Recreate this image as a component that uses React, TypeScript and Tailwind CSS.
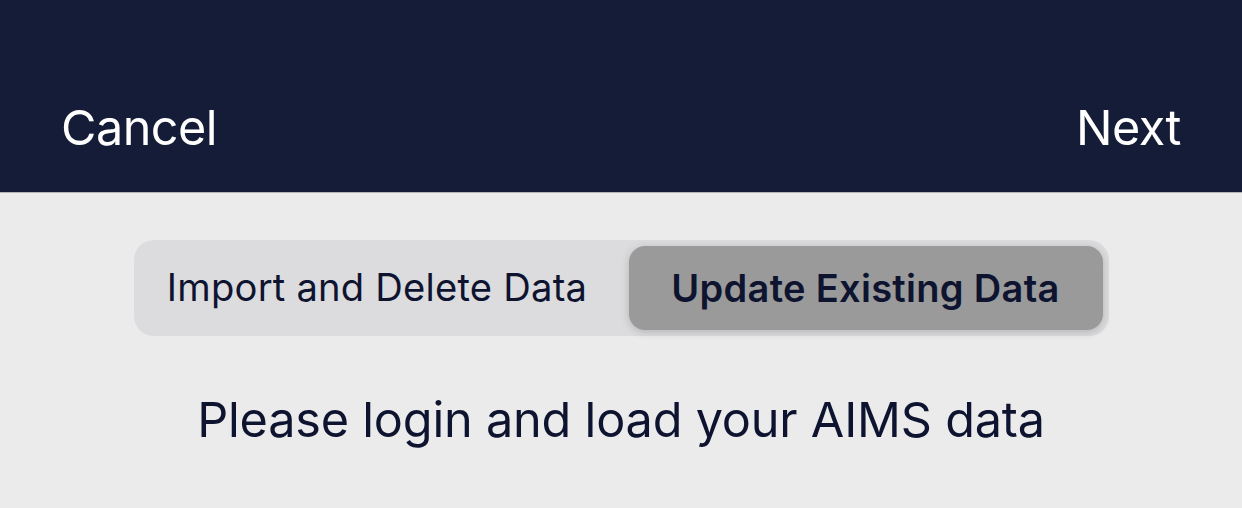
export default function App() {
  return (
    <div className="w-[1242px] h-[508px] bg-[#ebebeb] font-['Inter',sans-serif] overflow-hidden">
      <header className="h-[193px] bg-[#151c37] border-b border-[#b5b5b8] flex items-end justify-between px-[61px] pb-[40px]">
        <button className="text-white text-[48.5px] leading-none tracking-[-0.5px]">Cancel</button>
        <button className="text-white text-[48.5px] leading-none tracking-[-0.5px]">Next</button>
      </header>

      <div className="flex justify-center pt-[47px]">
        <div className="w-[975px] h-[96px] bg-[#dcdcde] rounded-[20px] p-[6px] flex">
          <div className="flex-1 flex items-center justify-center pr-[14px] text-[#0e1430] text-[38.2px] tracking-[0.2px]">
            Import and Delete Data
          </div>
          <div className="w-[474px] rounded-[16px] bg-[#9a9a9a] shadow-[0_2px_8px_rgba(0,0,0,0.18)] flex items-center justify-center text-[#0e1430] text-[38px] font-semibold tracking-[0.3px]">
            Update Existing Data
          </div>
        </div>
      </div>

      <p className="mt-[48px] text-center text-[#0e1430] text-[48.6px] tracking-[-0.2px]">
        Please login and load your AIMS data
      </p>
    </div>
  );
}
